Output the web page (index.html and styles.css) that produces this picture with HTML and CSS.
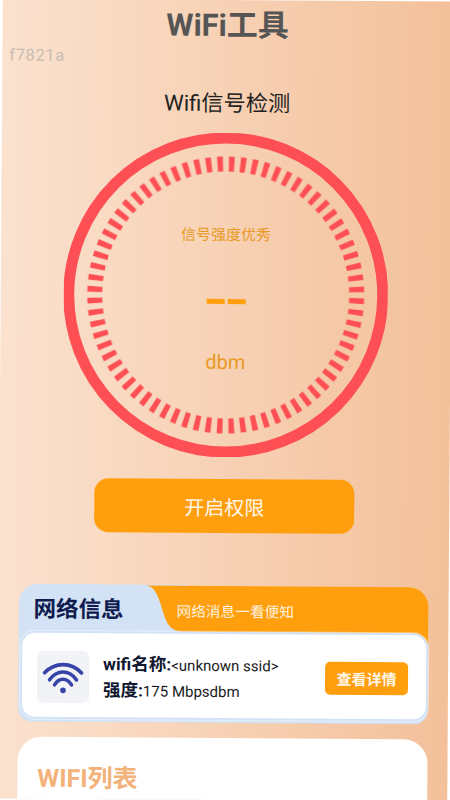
FILE: index.html
```html
<!DOCTYPE html>
<html lang="en">
  <head>
    <meta charset="UTF-8" />
    <meta name="viewport" content="width=device-width, initial-scale=1.0" />
    <title>WiFi工具</title>
    <link rel="stylesheet" href="styles.css">
  </head>
  <body>
    <div class="page">
      <h1 class="pageTitle">WiFi工具</h1>
      <p class="colorCode">f7821a</p>
      <h2 class="meterTitle">Wifi信号检测</h2>

      <div class="meter">
        <svg class="meterRing" viewBox="0 0 324 324">
          <circle class="ringOuter" cx="162" cy="162" r="157" />
          <circle class="ringTicks" cx="162" cy="162" r="131" pathLength="72" />
        </svg>
        <div class="meterText">
          <p class="meterLevel">信号强度优秀</p>
          <div class="meterDashes"><span></span><span></span></div>
          <p class="meterUnit">dbm</p>
        </div>
      </div>

      <button class="openBtn">开启权限</button>

      <section class="netCard">
        <svg class="netBack" viewBox="0 0 410 138">
          <path class="netBlue" d="M0 20A20 20 0 0 1 20 0H170V46H410V124A14 14 0 0 1 396 138H14A14 14 0 0 1 0 124Z" />
          <path class="netOrange" d="M127 1H390A20 20 0 0 1 410 21V70H395V47H164C152 47 148 38 145 29C141 15 137 1 127 1Z" />
        </svg>
        <div class="netHead">
          <h3 class="netTitle">网络信息</h3>
          <p class="netHint">网络消息一看便知</p>
        </div>
        <div class="netBody">
          <div class="wifiTile">
            <svg viewBox="0 0 52 52">
              <path class="wifiArc" d="M7.500 22C18 11 34 11 44.500 22" />
              <path class="wifiArc" d="M12.500 29C20 18.500 32 18.500 39.500 29" />
              <path class="wifiArc" d="M17.500 34C22 26.500 30 26.500 34.500 34" />
              <circle class="wifiDot" cx="26" cy="39.500" r="2.800" />
            </svg>
          </div>
          <div class="netInfo">
            <p><b>wifi名称:</b>&lt;unknown ssid&gt;</p>
            <p><b>强度:</b>175 Mbpsdbm</p>
          </div>
          <button class="detailBtn">查看详情</button>
        </div>
      </section>

      <section class="listCard">
        <h3 class="listTitle">WIFI列表</h3>
      </section>
    </div>
  </body>
</html>
```

FILE: styles.css
```css
* {
  padding: 0;
  margin: 0;
  box-sizing: border-box;
}
html,
body {
  background: #fff;
  height: 100%;
  overflow: hidden;
}
body {
  font-family: Roboto, "Noto Sans CJK SC", sans-serif;
}
.page {
  width: 450px;
  height: 800px;
  overflow: hidden;
  display: flex;
  flex-direction: column;
  align-items: center;
  background: linear-gradient(90deg, #fbe2cf, #f3c09a);
  transform: rotate(0.4deg);
}
.pageTitle {
  margin-top: 6px;
  font-size: 31px;
  line-height: 40px;
  color: #555;
}
.colorCode {
  align-self: flex-start;
  margin-top: 1px;
  margin-left: 7px;
  font-size: 16.500px;
  line-height: 20px;
  letter-spacing: 0.6px;
  color: #c9bdb2;
}
.meterTitle {
  margin-top: 21px;
  font-size: 22.200px;
  font-weight: 400;
  line-height: 30px;
  color: #222;
}
.meter {
  position: relative;
  width: 324px;
  height: 324px;
  margin-top: 15px;
}
.meterRing {
  display: block;
  width: 100%;
  height: 100%;
}
.ringOuter {
  fill: none;
  stroke: #fd4f54;
  stroke-width: 11;
}
.ringTicks {
  fill: none;
  stroke: #fd4f54;
  stroke-width: 15;
  stroke-dasharray: 0.48 0.52;
  stroke-dashoffset: -0.2;
  filter: blur(0.4px);
}
.meterText {
  position: absolute;
  top: 0;
  left: 0;
  right: 0;
  display: flex;
  flex-direction: column;
  align-items: center;
  color: #e89a25;
}
.meterLevel {
  margin-top: 92px;
  font-size: 15px;
  line-height: 20px;
}
.meterDashes {
  display: flex;
  gap: 3px;
  margin-top: 53.500px;
}
.meterDashes span {
  width: 18px;
  height: 5px;
  background: #ff9f0e;
}
.meterUnit {
  margin-top: 46.500px;
  font-size: 20px;
  line-height: 24px;
}
.openBtn {
  flex: none;
  width: 260px;
  height: 54px;
  margin-top: 22px;
  border: none;
  border-radius: 14px;
  background: #ff9f0e;
  color: #fff6e8;
  font-family: inherit;
  font-size: 20px;
}
.netCard {
  position: relative;
  flex: none;
  width: 410px;
  height: 138px;
  margin-top: 52px;
}
.netBack {
  position: absolute;
  top: 0;
  left: 0;
  width: 100%;
  height: 100%;
}
.netBlue {
  fill: #d3e3f5;
}
.netOrange {
  fill: #ff9f0e;
}
.netHead {
  position: relative;
  display: flex;
  align-items: center;
  height: 47px;
  padding-top: 3px;
}
.netTitle {
  width: 158px;
  padding-left: 15px;
  font-size: 22.500px;
  line-height: 44px;
  color: #101c50;
}
.netHint {
  font-size: 14.700px;
  color: #fff0da;
}
.netBody {
  position: relative;
  display: flex;
  align-items: center;
  height: 88px;
  margin-left: 2px;
  padding: 3px 18px 0 15px;
  border: 2.500px solid #d3e3f5;
  border-radius: 15px;
  background: #fff;
  box-shadow: 0 0 0 1px rgba(255, 255, 255, 0.45);
}
.wifiTile {
  flex: none;
  width: 52px;
  height: 52px;
  border-radius: 6px;
  background: #f2f3f7;
}
.wifiTile svg {
  display: block;
}
.wifiArc {
  fill: none;
  stroke: #3644a8;
  stroke-width: 3.600;
  stroke-linecap: round;
}
.wifiDot {
  fill: #3644a8;
}
.netInfo {
  flex: 1;
  margin-left: 14px;
  padding-top: 2px;
  font-size: 15px;
  line-height: 25px;
  color: #1b1b1f;
}
.netInfo b {
  font-size: 17.500px;
  color: #101830;
}
.detailBtn {
  flex: none;
  width: 83px;
  height: 33px;
  border: none;
  border-radius: 5px;
  background: #ff9f0e;
  color: #fff6e8;
  font-family: inherit;
  font-size: 15px;
  font-weight: 700;
}
.listCard {
  flex: none;
  width: 410px;
  height: 120px;
  margin-top: 15px;
  padding: 26px 20px;
  border-radius: 24px 24px 0 0;
  background: #fff;
}
.listTitle {
  font-size: 25px;
  line-height: 32px;
  color: #f3b27a;
}
```
